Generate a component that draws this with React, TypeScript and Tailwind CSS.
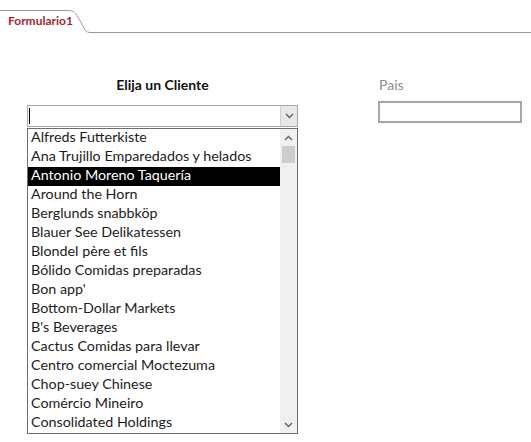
import { Fragment } from "react";

const CLIENTS = [
  "Alfreds Futterkiste",
  "Ana Trujillo Emparedados y helados",
  "Antonio Moreno Taquería",
  "Around the Horn",
  "Berglunds snabbköp",
  "Blauer See Delikatessen",
  "Blondel père et fils",
  "Bólido Comidas preparadas",
  "Bon app'",
  "Bottom-Dollar Markets",
  "B's Beverages",
  "Cactus Comidas para llevar",
  "Centro comercial Moctezuma",
  "Chop-suey Chinese",
  "Comércio Mineiro",
  "Consolidated Holdings",
];

const SELECTED = 2;

function Chevron({ up = false }: { up?: boolean }) {
  return (
    <svg width="9" height="6" viewBox="0 0 9 6" className="block">
      <polyline
        points={up ? "1,5 4.5,1.5 8,5" : "1,1 4.5,4.5 8,1"}
        fill="none"
        stroke="#606060"
        strokeWidth="1.4"
      />
    </svg>
  );
}

// Access-style form tab strip along the top edge.
function TabStrip() {
  return (
    <div className="relative h-[34px] w-full">
      <svg width="531" height="34" viewBox="0 0 531 34" className="absolute left-0 top-0">
        <path
          d="M0 10.5 H68 C73 10.5 75 12 77 15.5 L85 29.5 C86.5 32 88 32.5 91 32.5 H531"
          fill="none"
          stroke="#9a9a9a"
          strokeWidth="1"
        />
      </svg>
      <span className="absolute left-[8px] top-[14px] text-[12px] font-bold leading-[14px] text-[#a4262c]">
        Formulario1
      </span>
    </div>
  );
}

export default function App() {
  return (
    <div
      className="h-[442px] w-[531px] overflow-hidden bg-white"
      style={{ fontFamily: "Lato, 'Open Sans', sans-serif" }}
    >
      <TabStrip />
      <div className="flex pl-[27px] pt-[42px]">
        <div className="flex w-[271px] flex-col">
          <div className="h-[18px] text-center text-[14px] font-bold leading-[18px] text-[#111]">
            Elija un Cliente
          </div>
          <div className="mt-[11px] flex h-[22px] border border-[#a6a6a6] bg-white">
            <div className="flex flex-1 items-center pl-[1px]">
              <div className="h-[16px] w-[1px] bg-black" />
            </div>
            <div className="flex w-[17px] items-center justify-center border-l border-[#d0d0d0] bg-[#e8e8e8]">
              <Chevron />
            </div>
          </div>
          <div className="mt-[1px] flex h-[306px] border border-[#6e6e6e] bg-white">
            <ul className="flex-1">
              {CLIENTS.map((name, i) => (
                <Fragment key={name}>
                  <li
                    className={
                      i === SELECTED
                        ? "h-[19px] whitespace-nowrap bg-black pl-[3px] text-[14.3px] leading-[16px] text-white"
                        : "h-[19px] whitespace-nowrap pl-[3px] text-[14.3px] leading-[16px] text-[#1c1c1c]"
                    }
                  >
                    {name}
                  </li>
                </Fragment>
              ))}
            </ul>
            <div className="flex w-[17px] flex-col bg-[#f0f0f0]">
              <div className="flex h-[17px] items-center justify-center">
                <Chevron up />
              </div>
              <div className="mx-[2px] h-[17px] bg-[#cdcdcd]" />
              <div className="flex-1" />
              <div className="flex h-[17px] items-center justify-center">
                <Chevron />
              </div>
            </div>
          </div>
        </div>
        <div className="ml-[80px] flex w-[144px] flex-col">
          <div className="h-[18px] pl-[1px] text-[14px] leading-[18px] text-[#8c8c8c]">Pais</div>
          <div className="mt-[7px] h-[22px] border-2 border-[#a6a6a6] bg-white" />
        </div>
      </div>
    </div>
  );
}
